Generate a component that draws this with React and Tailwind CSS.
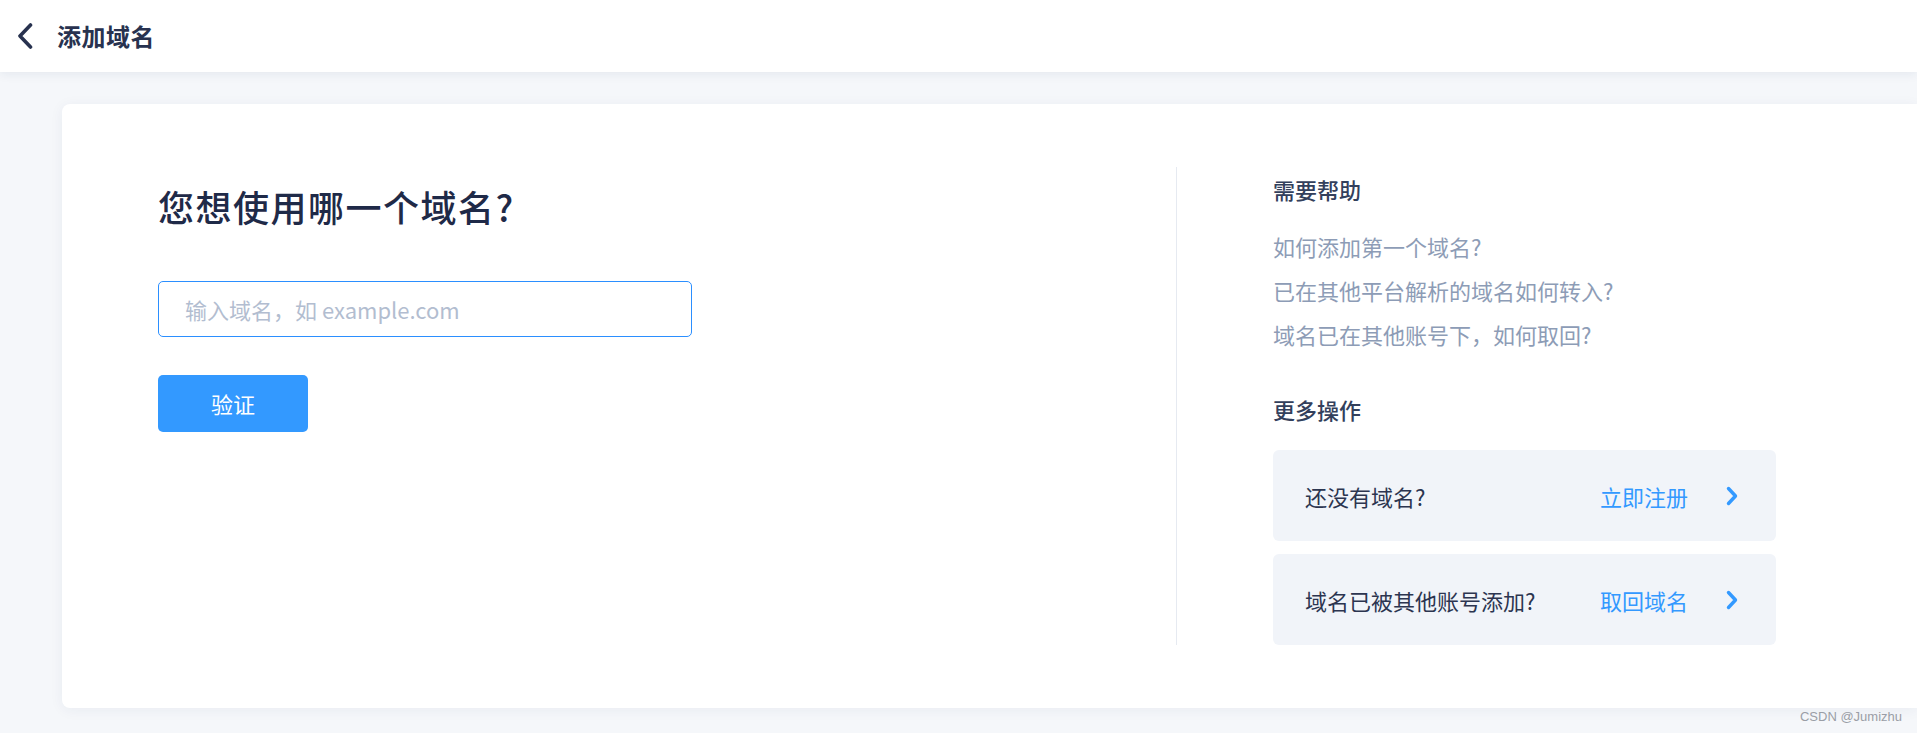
import React from "react";

const FONT = { fontFamily: '"Noto Sans CJK SC", "Noto Sans", sans-serif' };

function Chevron({ className }) {
  return (
    <svg className={className} viewBox="0 0 12 20" fill="none">
      <path d="M2.5 2.5 L9.5 10 L2.5 17.5" stroke="currentColor" strokeWidth="3.4" strokeLinecap="round" strokeLinejoin="round" />
    </svg>
  );
}

function ActionBox({ label, action }) {
  return (
    <div className="flex h-[91px] items-center rounded-[6px] bg-[#f1f4f9] pl-[32px] pr-[38px]">
      <span className="flex-1 text-[22px] leading-[30px] text-[#2c3550]">{label}</span>
      <span className="text-[22px] leading-[30px] text-[#3399ff]">{action}</span>
      <Chevron className="ml-[38px] h-[20px] w-[12px] text-[#3399ff]" />
    </div>
  );
}

export default function App() {
  return (
    <div style={FONT} className="relative min-h-[733px] w-full overflow-hidden bg-[#f5f7fa]">
      <header className="relative z-10 flex h-[72px] items-center bg-white shadow-[0_2px_10px_rgba(30,50,100,0.08)]">
        <svg className="ml-[17px] h-[26px] w-[16px] text-[#28324f]" viewBox="0 0 16 26" fill="none">
          <path d="M13.5 2 L3 13 L13.5 24" stroke="currentColor" strokeWidth="3.6" strokeLinecap="round" strokeLinejoin="round" />
        </svg>
        <h1 className="ml-[24px] text-[24px] font-semibold leading-[32px] tracking-[0.5px] text-[#28324f]">添加域名</h1>
      </header>

      <div className="pl-[62px] pt-[32px]">
        <div className="flex h-[604px] rounded-l-[8px] bg-white py-[63px] pl-[96px] shadow-[0_2px_14px_rgba(30,50,100,0.06)]">
          <div className="w-[1018px] pt-[14px]">
            <h2 className="text-[36px] font-medium leading-[50px] tracking-[1.5px] text-[#1f2a48]">您想使用哪一个域名?</h2>
            <input
              type="text"
              placeholder="输入域名，如 example.com"
              className="mt-[50px] block h-[56px] w-[534px] rounded-[5px] border-[1.5px] border-[#2b8fff] bg-white pl-[26px] text-[22px] text-[#1f2a48] outline-none placeholder:text-[#b2bdd0]"
            />
            <button className="mt-[38px] flex h-[57px] w-[150px] items-center justify-center rounded-[5px] bg-[#3399ff] text-[22px] text-white">
              验证
            </button>
          </div>

          <div className="w-px bg-[#e6eaf1]" />

          <div className="flex w-[599px] flex-col pl-[96px] pt-[7px]">
            <h3 className="text-[22px] font-medium leading-[30px] text-[#33405c]">需要帮助</h3>
            <div className="mt-[20px] flex flex-col text-[22px] leading-[44px] text-[#8d9cb6]">
              <a>如何添加第一个域名?</a>
              <a>已在其他平台解析的域名如何转入?</a>
              <a>域名已在其他账号下，如何取回?</a>
            </div>
            <h3 className="mt-[38px] text-[22px] font-medium leading-[30px] text-[#33405c]">更多操作</h3>
            <div className="mt-[26px] flex flex-col gap-[13px]">
              <ActionBox label="还没有域名?" action="立即注册" />
              <ActionBox label="域名已被其他账号添加?" action="取回域名" />
            </div>
          </div>
        </div>
      </div>

      <div className="absolute bottom-[8px] right-[15px] text-[13px] leading-[16px] text-[#9a9ea6]" style={{ fontFamily: '"Liberation Sans", sans-serif' }}>
        CSDN @Jumizhu
      </div>
    </div>
  );
}
